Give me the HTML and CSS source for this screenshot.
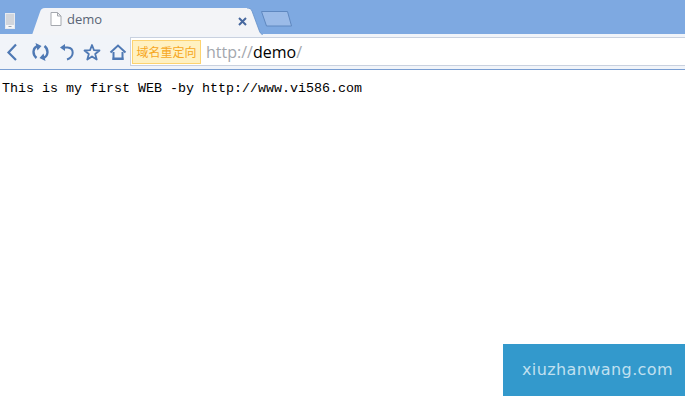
FILE: index.html
```html
<!DOCTYPE html>
<html lang="en">
<head>
<meta charset="utf-8">
<title>demo</title>
<link rel="stylesheet" href="styles.css">
</head>
<body>
<header class="chrome">
  <div class="tabstrip">
    <svg class="phone" width="12" height="18" viewBox="0 0 12 18"><rect x="1.500" y="1.500" width="9" height="15" fill="#d2d6dc" stroke="#e6eaf0"/><rect x="2" y="13" width="8" height="3" fill="#f5f6f8"/><rect x="4.500" y="14" width="3" height="1" fill="#9aa3ad"/></svg>
    <div class="tab">
      <svg class="tab-shape" width="231" height="27" viewBox="0 0 231 27"><path d="M0 27 L8 4 C9 1 10 0 13 0 L215 0 C218 0 219 1 220 3 L227 22 C228 25 229 26 231 27 Z" fill="#f3f4f7"/><path d="M215 0 C218 0 219 1 220 3 L227 22 C228 25 229 26 231 27" fill="none" stroke="#6590c9" stroke-width="0.8"/></svg>
      <svg class="file" width="12" height="14" viewBox="0 0 12 14"><path d="M1 .5H7.500L11 4V13.500H1ZM7.500 .5V4H11" fill="#fff" stroke="#a5a8ae"/></svg>
      <span class="tab-title">demo</span>
      <svg class="close" width="9" height="9" viewBox="0 0 9 9"><path d="M1 1L8 8M8 1L1 8" stroke="#47689f" stroke-width="2"/></svg>
    </div>
    <svg class="newtab" width="34" height="16" viewBox="0 0 34 16"><path d="M1.500 .5H27.500L31.500 15H6.500Z" fill="#9bbbe8" stroke="#5f88c0"/></svg>
  </div>
  <div class="toolbar">
    <div class="nav">
      <svg width="16" height="18" viewBox="0 0 16 18"><path d="M12 1.500L4.500 9.500L12 17" fill="none" stroke="#4f79b4" stroke-width="2.200"/></svg>
      <svg class="reload" width="17" height="18" viewBox="0 0 17 18"><g fill="none" stroke="#4f79b4" stroke-width="2.400"><path d="M4.500 15C.2 11.500 .5 4.500 6 3"/><path d="M12.500 3C16.800 6.500 16.500 13.500 11 15"/></g><path d="M3.500 0L9.500 3L5.500 7.500ZM13.500 18L7.500 15L11.500 10.500Z" fill="#4f79b4"/></svg>
      <svg class="undo" width="16" height="18" viewBox="0 0 16 18"><path d="M5.500 4.500H8.500C15.500 5 15.500 14 8 16.500" fill="none" stroke="#4f79b4" stroke-width="2"/><path d="M1 4.500L6 1V8Z" fill="#4f79b4"/></svg>
      <svg width="18" height="18" viewBox="0 0 18 18"><path d="M9 2L11 7.200L16.500 7.500L12.200 11L13.700 16.500L9 13.400L4.300 16.500L5.800 11L1.500 7.500L7 7.200Z" fill="none" stroke="#4f79b4" stroke-width="1.800" stroke-linejoin="round"/></svg>
      <svg width="18" height="18" viewBox="0 0 18 18"><path d="M1.500 9.500L9 2.500L16.500 9.500" fill="none" stroke="#4f79b4" stroke-width="2"/><path d="M4.500 9V16H13.500V9" fill="none" stroke="#4f79b4" stroke-width="2"/><path d="M3.500 14.500H14.500V17H3.500Z" fill="#4f79b4"/></svg>
    </div>
    <div class="address">
      <span class="badge">域名重定向</span>
      <span class="url"><span class="scheme">http://</span><span class="host">demo</span><span class="scheme">/</span></span>
    </div>
  </div>
</header>
<main class="content">This is my first WEB -by http://www.vi586.com</main>
<div class="watermark">xiuzhanwang.com</div>
</body>
</html>
```
FILE: styles.css
```css
* { box-sizing: border-box; }
html, body { margin: 0; height: 100%; overflow: hidden; background: #fff; }
body { position: relative; }

.tabstrip {
  height: 34px;
  background: #7ea9e1;
  display: flex;
  align-items: flex-end;
}
.phone { margin: 0 0 4px 4px; flex: none; }
.tab {
  position: relative;
  width: 231px;
  height: 27px;
  margin-left: 16px;
  margin-bottom: -1px;
  flex: none;
  display: flex;
  align-items: center;
  padding: 0 0 5px 18px;
}
.tab-shape { position: absolute; left: 0; top: 0; }
.file { position: relative; flex: none; }
.tab-title {
  position: relative;
  margin-left: 5px;
  font: 13px/18px "Open Sans", sans-serif;
  color: #5a6475;
}
.close { position: relative; margin-left: 136px; margin-top: 5px; flex: none; }
.newtab { margin: 0 0 7px -3px; flex: none; }

.toolbar {
  height: 36px;
  background: #f1f4f9;
  border-bottom: 1px solid #7a9fd3;
  display: flex;
  align-items: center;
  padding-left: 4px;
}
.nav {
  display: flex;
  align-items: center;
  gap: 8px;
  width: 126px;
  flex: none;
  padding-top: 1px;
}
.nav svg { flex: none; }
.nav .reload { margin-left: 4px; }
.nav .undo { margin-left: 2px; }
.address {
  flex: 1;
  height: 29px;
  background: #fff;
  border: 1px solid #c9d1df;
  border-right: 0;
  display: flex;
  align-items: center;
}
.badge {
  width: 69px;
  height: 24px;
  margin-left: 1px;
  background: #fff1c1;
  border: 1px solid #fdd36f;
  color: #f6a723;
  font: 12px/22px "Noto Sans CJK SC", sans-serif;
  text-align: center;
}
.url { margin-left: 5px; font: 16px/22px "Open Sans", sans-serif; }
.scheme { color: #a3a7ae; }
.host { color: #000; }

.content {
  padding: 10px 2px;
  font: 13.33px/17px "Liberation Mono", monospace;
  color: #000;
}

.watermark {
  position: absolute;
  left: 503px;
  top: 344px;
  width: 182px;
  height: 52px;
  background: #3399cc;
  color: #c0e0f0;
  font: 16px/52px "DejaVu Sans", sans-serif;
  letter-spacing: 0.4px;
  padding-left: 19px;
  white-space: nowrap;
}
```
